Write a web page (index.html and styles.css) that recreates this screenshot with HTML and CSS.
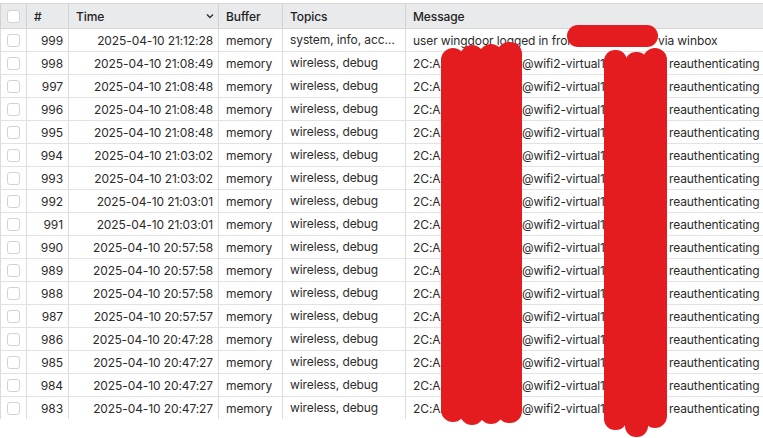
FILE: index.html
```html
<!DOCTYPE html>
<html>
<head>
<meta charset="utf-8">
<link rel="stylesheet" href="styles.css">
</head>
<body>
<div class="page">
  <div class="grid">
    <div class="row head">
      <div class="cell chk"><span class="box"></span></div>
      <div class="cell">#</div>
      <div class="cell time-h"><span>Time</span><svg class="chev" width="8" height="6" viewBox="0 0 8 6"><path d="M1 1.5 L4 4.5 L7 1.5" fill="none" stroke="#333" stroke-width="1.4"/></svg></div>
      <div class="cell">Buffer</div>
      <div class="cell">Topics</div>
      <div class="cell">Message</div>
    </div>
    <div class="row"><div class="cell chk"><span class="box"></span></div><div class="cell num">999</div><div class="cell num">2025-04-10 21:12:28</div><div class="cell">memory</div><div class="cell ell">system, info, account</div><div class="cell msg"><span class="seg p0">user wingdoor logged in from 192.168.8</span><span>via winbox</span></div></div>
    <div class="row"><div class="cell chk"><span class="box"></span></div><div class="cell num">998</div><div class="cell num">2025-04-10 21:08:49</div><div class="cell">memory</div><div class="cell ell">wireless, debug</div><div class="cell msg"><span class="seg p1">2C:AA:BB:CC:DD</span><span class="seg p2">@wifi2-virtual1 (X-X)</span><span>reauthenticating</span></div></div>
    <div class="row"><div class="cell chk"><span class="box"></span></div><div class="cell num">997</div><div class="cell num">2025-04-10 21:08:48</div><div class="cell">memory</div><div class="cell ell">wireless, debug</div><div class="cell msg"><span class="seg p1">2C:AA:BB:CC:DD</span><span class="seg p2">@wifi2-virtual1 (X-X)</span><span>reauthenticating</span></div></div>
    <div class="row"><div class="cell chk"><span class="box"></span></div><div class="cell num">996</div><div class="cell num">2025-04-10 21:08:48</div><div class="cell">memory</div><div class="cell ell">wireless, debug</div><div class="cell msg"><span class="seg p1">2C:AA:BB:CC:DD</span><span class="seg p2">@wifi2-virtual1 (X-X)</span><span>reauthenticating</span></div></div>
    <div class="row"><div class="cell chk"><span class="box"></span></div><div class="cell num">995</div><div class="cell num">2025-04-10 21:08:48</div><div class="cell">memory</div><div class="cell ell">wireless, debug</div><div class="cell msg"><span class="seg p1">2C:AA:BB:CC:DD</span><span class="seg p2">@wifi2-virtual1 (X-X)</span><span>reauthenticating</span></div></div>
    <div class="row"><div class="cell chk"><span class="box"></span></div><div class="cell num">994</div><div class="cell num">2025-04-10 21:03:02</div><div class="cell">memory</div><div class="cell ell">wireless, debug</div><div class="cell msg"><span class="seg p1">2C:AA:BB:CC:DD</span><span class="seg p2">@wifi2-virtual1 (X-X)</span><span>reauthenticating</span></div></div>
    <div class="row"><div class="cell chk"><span class="box"></span></div><div class="cell num">993</div><div class="cell num">2025-04-10 21:03:02</div><div class="cell">memory</div><div class="cell ell">wireless, debug</div><div class="cell msg"><span class="seg p1">2C:AA:BB:CC:DD</span><span class="seg p2">@wifi2-virtual1 (X-X)</span><span>reauthenticating</span></div></div>
    <div class="row"><div class="cell chk"><span class="box"></span></div><div class="cell num">992</div><div class="cell num">2025-04-10 21:03:01</div><div class="cell">memory</div><div class="cell ell">wireless, debug</div><div class="cell msg"><span class="seg p1">2C:AA:BB:CC:DD</span><span class="seg p2">@wifi2-virtual1 (X-X)</span><span>reauthenticating</span></div></div>
    <div class="row"><div class="cell chk"><span class="box"></span></div><div class="cell num">991</div><div class="cell num">2025-04-10 21:03:01</div><div class="cell">memory</div><div class="cell ell">wireless, debug</div><div class="cell msg"><span class="seg p1">2C:AA:BB:CC:DD</span><span class="seg p2">@wifi2-virtual1 (X-X)</span><span>reauthenticating</span></div></div>
    <div class="row"><div class="cell chk"><span class="box"></span></div><div class="cell num">990</div><div class="cell num">2025-04-10 20:57:58</div><div class="cell">memory</div><div class="cell ell">wireless, debug</div><div class="cell msg"><span class="seg p1">2C:AA:BB:CC:DD</span><span class="seg p2">@wifi2-virtual1 (X-X)</span><span>reauthenticating</span></div></div>
    <div class="row"><div class="cell chk"><span class="box"></span></div><div class="cell num">989</div><div class="cell num">2025-04-10 20:57:58</div><div class="cell">memory</div><div class="cell ell">wireless, debug</div><div class="cell msg"><span class="seg p1">2C:AA:BB:CC:DD</span><span class="seg p2">@wifi2-virtual1 (X-X)</span><span>reauthenticating</span></div></div>
    <div class="row"><div class="cell chk"><span class="box"></span></div><div class="cell num">988</div><div class="cell num">2025-04-10 20:57:58</div><div class="cell">memory</div><div class="cell ell">wireless, debug</div><div class="cell msg"><span class="seg p1">2C:AA:BB:CC:DD</span><span class="seg p2">@wifi2-virtual1 (X-X)</span><span>reauthenticating</span></div></div>
    <div class="row"><div class="cell chk"><span class="box"></span></div><div class="cell num">987</div><div class="cell num">2025-04-10 20:57:57</div><div class="cell">memory</div><div class="cell ell">wireless, debug</div><div class="cell msg"><span class="seg p1">2C:AA:BB:CC:DD</span><span class="seg p2">@wifi2-virtual1 (X-X)</span><span>reauthenticating</span></div></div>
    <div class="row"><div class="cell chk"><span class="box"></span></div><div class="cell num">986</div><div class="cell num">2025-04-10 20:47:28</div><div class="cell">memory</div><div class="cell ell">wireless, debug</div><div class="cell msg"><span class="seg p1">2C:AA:BB:CC:DD</span><span class="seg p2">@wifi2-virtual1 (X-X)</span><span>reauthenticating</span></div></div>
    <div class="row"><div class="cell chk"><span class="box"></span></div><div class="cell num">985</div><div class="cell num">2025-04-10 20:47:27</div><div class="cell">memory</div><div class="cell ell">wireless, debug</div><div class="cell msg"><span class="seg p1">2C:AA:BB:CC:DD</span><span class="seg p2">@wifi2-virtual1 (X-X)</span><span>reauthenticating</span></div></div>
    <div class="row"><div class="cell chk"><span class="box"></span></div><div class="cell num">984</div><div class="cell num">2025-04-10 20:47:27</div><div class="cell">memory</div><div class="cell ell">wireless, debug</div><div class="cell msg"><span class="seg p1">2C:AA:BB:CC:DD</span><span class="seg p2">@wifi2-virtual1 (X-X)</span><span>reauthenticating</span></div></div>
    <div class="row last"><div class="cell chk"><span class="box"></span></div><div class="cell num">983</div><div class="cell num">2025-04-10 20:47:27</div><div class="cell">memory</div><div class="cell ell">wireless, debug</div><div class="cell msg"><span class="seg p1">2C:AA:BB:CC:DD</span><span class="seg p2">@wifi2-virtual1 (X-X)</span><span>reauthenticating</span></div></div>
  </div>

  <div class="redact r-top"></div>
  <div class="redact s1"></div>
  <div class="redact s2"></div>
  <div class="redact s3"></div>
  <div class="redact s4"></div>
  <div class="redact t1"></div>
  <div class="redact t2"></div>
  <div class="redact t3"></div>
</div>
</body>
</html>
```

FILE: styles.css
```css
html, body {
  margin: 0;
  padding: 0;
  background: #ffffff;
}
.page {
  position: relative;
  width: 763px;
  height: 438px;
  overflow: hidden;
  padding-top: 3px;
  box-sizing: border-box;
  font-family: Inter, "Liberation Sans", sans-serif;
  font-size: 12px;
  letter-spacing: -0.1px;
  color: #2b2b2b;
}
.grid {
  border-top: 1px solid #d6d6d8;
}
.row {
  display: grid;
  grid-template-columns: 26px 42px 150px 64px 123px 1fr;
  height: 23px;
  border-bottom: 1px solid #e2e2e4;
  box-sizing: border-box;
}
.row.last {
  border-bottom: none;
  height: 22px;
}
.row.head {
  height: 25px;
  background: #e9eaec;
  border-bottom: 1px solid #d6d6d8;
  font-weight: 500;
  color: #222;
}
.cell {
  border-left: 1px solid #dcdcde;
  padding: 0 7px;
  display: flex;
  align-items: center;
  white-space: nowrap;
  overflow: hidden;
  min-width: 0;
}
.row.head .cell {
  border-left-color: #d2d2d4;
}
.cell.chk {
  padding: 0 0 0 6px;
}
.box {
  width: 13px;
  height: 13px;
  border: 1px solid #d3d3d5;
  border-radius: 3px;
  background: #fff;
  box-sizing: border-box;
}
.cell.num {
  justify-content: flex-end;
  padding-right: 5px;
}
.time-h {
  justify-content: space-between;
  padding-right: 4px;
}
.chev {
  display: block;
}
.cell.ell {
  display: block;
  line-height: 22px;
  text-overflow: ellipsis;
}
.seg {
  flex: none;
  overflow: hidden;
  white-space: nowrap;
}
.p0 { width: 245px; }
.p1 { width: 109px; }
.p2 { width: 147px; }
.redact {
  position: absolute;
  background: #e51c1f;
}
.r-top {
  left: 567px; top: 25px; width: 91px; height: 22px; border-radius: 11px;
}
.s1 { left: 441px; top: 48px; width: 24px; height: 374px; border-radius: 12px; }
.s2 { left: 460px; top: 45px; width: 24px; height: 380px; border-radius: 12px; }
.s3 { left: 479px; top: 44px; width: 24px; height: 380px; border-radius: 12px; }
.s4 { left: 497px; top: 42px; width: 25px; height: 381px; border-radius: 12px; }
.t1 { left: 604px; top: 50px; width: 23px; height: 380px; border-radius: 11px; }
.t2 { left: 625px; top: 52px; width: 23px; height: 385px; border-radius: 11px; }
.t3 { left: 643px; top: 48px; width: 24px; height: 380px; border-radius: 12px; }
```
